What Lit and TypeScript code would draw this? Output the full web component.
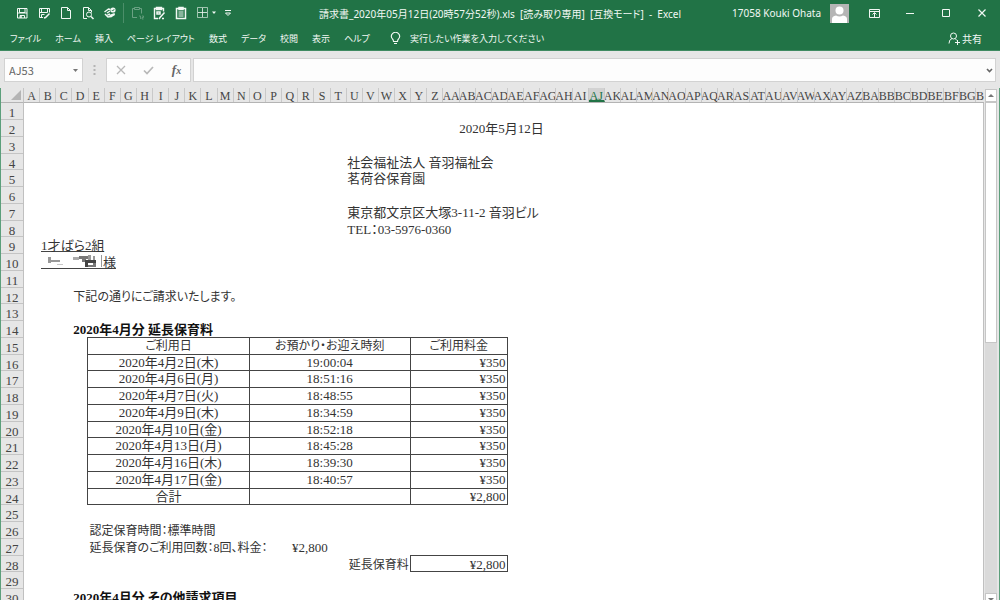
import { LitElement, html, css, svg } from "lit";
import { customElement } from "lit/decorators.js";
import { classMap } from "lit/directives/class-map.js";

const columnName = (i: number): string =>
  (i >= 26 ? String.fromCharCode(64 + Math.floor(i / 26)) : "") + String.fromCharCode(65 + (i % 26));

const COLUMNS = Array.from({ length: 60 }, (_, i) => columnName(i));
const ROWS = Array.from({ length: 30 }, (_, i) => i + 1);
const ACTIVE_COLUMN = "AJ";

const TABS = ["ファイル", "ホーム", "挿入", "ページ レイアウト", "数式", "データ", "校閲", "表示", "ヘルプ"];

const USAGE: [string, string, string][] = [
  ["2020年4月2日(木)", "19:00:04", "¥350"],
  ["2020年4月6日(月)", "18:51:16", "¥350"],
  ["2020年4月7日(火)", "18:48:55", "¥350"],
  ["2020年4月9日(木)", "18:34:59", "¥350"],
  ["2020年4月10日(金)", "18:52:18", "¥350"],
  ["2020年4月13日(月)", "18:45:28", "¥350"],
  ["2020年4月16日(木)", "18:39:30", "¥350"],
  ["2020年4月17日(金)", "18:40:57", "¥350"],
  ["合計", "", "¥2,800"],
];

const icon = (body: unknown, w = 14, h = 14) =>
  html`<svg width=${w} height=${h} viewBox="0 0 ${w} ${h}" fill="none" stroke="currentColor" aria-hidden="true">${body}</svg>`;

const TOOLS = [
  { label: "上書き保存", glyph: svg`<path d="M2.500 2.500h9.500v9.500h-9.500z"/><path d="M4.500 2.500v4h5.500v-4M2.500 7h9.500M5 12V9.500h4.500V12"/><path d="M6 9.500v2.500" stroke-width="1.500"/>` },
  { label: "名前を付けて保存", glyph: svg`<path d="M6 11.500H2.500v-9h10v4M4.500 2.500v4h6v-4M2.500 6.500h7M4.500 11v-2.500h3"/><path d="M12.500 7.500l-4 4-1.500.500" stroke-width="1.500"/>` },
  { label: "新規作成", glyph: svg`<path d="M2.500 1.500h6l3 3v8h-9zM8.500 1.500v3h3"/>` },
  { label: "印刷プレビュー", glyph: svg`<path d="M6 12.500H2.500v-11h5l3 3v2M7.500 1.500v3h3"/><circle cx="8" cy="8.500" r="2.500"/><path d="M10 10.500l2.500 2.500" stroke-width="1.600"/>` },
  { label: "スペルチェック", glyph: svg`<path d="M1.500 6l4-3 2 .500M2 8l3 3 3-.500M4 7l3-2M4.500 9l2.500-1" stroke-width="1.500"/><circle cx="10" cy="4" r="2.600" fill="currentColor" stroke="none"/><path d="M8.800 4l1 1 1.500-2" stroke="#217346" stroke-width=".8"/><path d="M6 9l5.500-2 .500 2-4 2.500z" fill="currentColor" stroke="none"/>` },
];

const CLIPS = [
  { label: "値の貼り付け", dim: true, glyph: svg`<path d="M7 11.500H2.500v-9h2M9.500 2.500h2v5M4.500 1.500h5v2h-5z"/><path d="M9 10h1.500v3M12 10h1.500v1.500H12V13h1.500" stroke-width=".8"/>` },
  { label: "書式の貼り付け", dim: false, glyph: svg`<path d="M6 12.500H2.500v-10h9v3M4.500 1.500h5v2h-5z" stroke-width="1.400"/><path d="M5 6h3v2H5zM12.500 6.500l-4.500 5-1 1.500M10 12.500h2" stroke-width="1.500"/>` },
  { label: "貼り付け", dim: false, glyph: svg`<path d="M2.500 2.500h9v10h-9zM5 1.500h4v2H5z" stroke-width="1.500"/><path d="M4.500 6h5M4.500 8h5M4.500 10h5"/>` },
];

@customElement("app-root")
export class AppRoot extends LitElement {
  static styles = css`
    :host {
      display: flex;
      flex-direction: column;
      height: 100vh;
      overflow: hidden;
      box-sizing: border-box;
      background: #e6e6e6;
      font-family: "Noto Sans", "Noto Sans CJK JP", sans-serif;
      font-size: 10px;
      color: #333;
    }
    * { box-sizing: border-box; }
    button {
      display: flex;
      align-items: center;
      justify-content: center;
      border: 0;
      padding: 0;
      background: none;
      font: inherit;
      color: inherit;
    }
    svg { display: block; flex: none; }
    .top { background: #217346; color: #f2f8f4; border-bottom: 1px solid #3f8a61; }
    .titlebar {
      display: grid;
      grid-template-columns: 1fr auto 1fr;
      align-items: center;
      height: 26px;
    }
    .tools { display: flex; align-items: center; gap: 8px; padding-left: 15px; }
    .divider { width: 1px; height: 20px; margin: 0 -2px; background: #4b8e69; }
    .dim { opacity: 0.35; }
    .title { margin: 0; font-size: 10px; font-weight: 400; white-space: pre; font-feature-settings: "palt"; }
    .window { display: flex; align-items: center; justify-content: flex-end; }
    .user { margin-right: 9px; white-space: nowrap; }
    .avatar { margin-right: 7px; }
    .window button { width: 36px; height: 26px; }
    .ribbon { display: flex; align-items: center; height: 24px; padding: 0 18px 0 10px; }
    .tabs { display: flex; gap: 14px; }
    .tabs, .tell { font-size: 9px; font-family: "Noto Sans CJK JP", sans-serif; font-feature-settings: "palt"; white-space: nowrap; }
    .tabs a { color: inherit; text-decoration: none; }
    .tell { display: flex; align-items: center; gap: 9px; margin-left: 20px; }
    .share { margin-left: auto; gap: 2px; }
    .formula { display: flex; align-items: stretch; height: 37px; padding: 7px 4px 6px 4px; }
    .box { display: flex; align-items: center; background: #fdfdfd; border: 1px solid #d2d2d2; }
    .name { width: 79px; justify-content: space-between; padding: 0 3px 0 4px; }
    input { border: 0; padding: 0; background: none; outline: none; min-width: 0; color: #666; font: 11px "Noto Sans CJK JP", sans-serif; }
    .name input { width: 50px; }
    .grip { display: flex; align-items: center; justify-content: center; width: 23px; color: #b4b4b4; }
    .actions { width: 85px; margin-right: 2px; justify-content: space-around; color: #b8b8b8; }
    .fx { font: italic bold 13px "Liberation Serif", serif; color: #666; }
    .fx small { font-size: 10px; }
    .entry { flex: 1; padding-right: 2px; }
    .entry input { flex: 1; }

    .main {
      flex: 1;
      min-height: 0;
      display: grid;
      grid-template-columns: 23px 1fr 15px;
      grid-template-rows: 15px 1fr;
      border-left: 1px solid #5c9f7b;
      border-right: 1px solid #5c9f7b;
      font-family: "Liberation Serif", "Noto Sans CJK JP", serif;
      font-size: 12px;
      overflow: hidden;
    }
    .corner { display: flex; justify-content: flex-end; align-items: flex-end; padding: 0 2px 2px 0; border-right: 1px solid #c4c4c4; border-bottom: 1px solid #b4b4b4; }
    .tracks { display: grid; grid-template-columns: repeat(119, minmax(0, 1fr)); }
    .heads { border-bottom: 1px solid #b4b4b4; }
    .head {
      grid-column: span 2;
      display: flex;
      justify-content: center;
      overflow: hidden;
      border-right: 1px solid #c9c9c9;
      line-height: 16px;
      color: #444;
    }
    .head:last-child { grid-column: span 1; justify-content: flex-start; border-right: 0; }
    .head.active { background: #d2d2d2; color: #217346; border-bottom: 2px solid #217346; }
    .lines { display: grid; grid-template-rows: repeat(7, 17px 17px 17px 16px) 17px 17px; }
    .nums { border-right: 1px solid #c0c0c0; overflow: hidden; min-height: 0; font-size: 13px; }
    .num { display: flex; justify-content: center; border-bottom: 1px solid #c4c4c4; line-height: 19px; color: #444; overflow: hidden; }
    .sheet { background: #fff; border-right: 1px solid #c0c0c0; overflow: hidden; min-height: 0; font-size: 13px; line-height: 17px; font-feature-settings: "palt"; }
    .cell { white-space: pre; }
    .c2 { grid-column: 3 / span 20; padding-left: 1px; }
    .c4 { grid-column: 7 / span 40; padding-left: 1px; }
    .c5 { grid-column: 9 / span 40; padding-left: 1px; }
    .c17 { grid-column: 34 / span 12; padding-left: 2px; }
    .c21 { grid-column: 41 / span 40; padding-left: 1px; }
    .c28 { grid-column: 55 / span 20; }
    .label { grid-column: 37 / span 12; text-align: right; padding-right: 2px; }
    .total { grid-column: 49 / span 12; margin: -1px 0 0 -1px; border: 1px solid #444; text-align: right; padding-right: 1px; }
    .compact { font-size: 12px; line-height: 19px; }
    .r2 { grid-row: 2; } .r4 { grid-row: 4; } .r5 { grid-row: 5; } .r7 { grid-row: 7; } .r8 { grid-row: 8; }
    .r9 { grid-row: 9; } .r10 { grid-row: 10; } .r12 { grid-row: 12; } .r14 { grid-row: 14; }
    .r26 { grid-row: 26; } .r27 { grid-row: 27; } .r28 { grid-row: 28; } .r30 { grid-row: 30; }
    .bold { margin: 0; font-size: 13px; font-weight: 700; color: #111; }
    .under { display: inline-flex; border-bottom: 1px solid #444; height: 15px; }
    .mosaic { padding: 0 1px 0 7px; }
    table {
      grid-column: 9 / span 52;
      grid-row: 15 / span 10;
      display: grid;
      grid-template-columns: subgrid;
      grid-template-rows: subgrid;
      margin: -1px 0 0 -1px;
      border: solid #444;
      border-width: 1px 0 0 1px;
    }
    thead, tbody, tr { display: contents; }
    th, td {
      grid-column: span 20;
      padding: 0;
      font-weight: 400;
      text-align: center;
      border: solid #444;
      border-width: 0 1px 1px 0;
      line-height: 16px;
      overflow: hidden;
    }
    th { font-size: 12px; }
    th:last-child, td:last-child { grid-column: span 12; }
    td:last-child { text-align: right; padding-right: 1px; }
    .scroll { grid-row: 1 / span 2; grid-column: 3; display: flex; flex-direction: column; width: 12px; margin: 1px 0 -6px 1px; background: #dadada; color: #777; }
    .scroll button { height: 13px; background: #fff; border: 1px solid #c6c6c6; }
    .thumb { height: 241px; background: #fff; border: 1px solid #c6c6c6; }
    .rail { flex: 1; }
  `;

  private cell(place: string, text: string) {
    return html`<div class="cell ${place}">${text}</div>`;
  }

  private renderTop() {
    return html`
      <header class="top">
        <div class="titlebar">
          <div class="tools">
            ${TOOLS.map((t) => html`<button aria-label=${t.label}>${icon(t.glyph)}</button>`)}
            <span class="divider"></span>
            ${CLIPS.map((t) => html`<button class=${classMap({ dim: t.dim })} aria-label=${t.label}>${icon(t.glyph)}</button>`)}
            <button aria-label="罫線">${icon(svg`<path d="M1.500 1.500h10v10h-10z" opacity=".6"/><path d="M6.500 2v9M2 6.500h9" opacity=".8"/><path d="M16 5.500h4l-2 2.500z" fill="currentColor" stroke="none"/>`, 20)}</button>
            <button aria-label="クイック アクセス ツール バーのカスタマイズ">${icon(svg`<path d="M1 4.500h6M1.500 7h5l-2.500 2.500z"/>`, 8)}</button>
          </div>
          <h1 class="title">請求書_2020年05月12日(20時57分52秒).xls  [読み取り専用]  [互換モード]  -  Excel</h1>
          <div class="window">
            <span class="user">17058 Kouki Ohata</span>
            <svg class="avatar" width="19" height="19" viewBox="0 0 19 19" aria-hidden="true">
              <path fill="#b5b5b5" d="M0 0h19v19H0z" /><circle cx="9.500" cy="6.500" r="4" fill="#fff" /><path fill="#fff" d="M2 19v-4q0-3 4-3.500q3.500 2 7 0q4 .5 4 3.500v4z" />
            </svg>
            <button aria-label="リボンの表示オプション">${icon(svg`<path d="M1.500 2.500h10v8h-10zM2 4.500h9M6.500 10V6M4.500 7.500l2-2 2 2"/>`, 13, 13)}</button>
            <button aria-label="最小化">${icon(svg`<path d="M1 5.500h8"/>`, 10, 10)}</button>
            <button aria-label="最大化">${icon(svg`<path d="M1.500 1.500h7v7h-7z"/>`, 10, 10)}</button>
            <button aria-label="閉じる">${icon(svg`<path d="M1.500 1.500l7 7M8.500 1.500l-7 7" stroke-width="1.200"/>`, 10, 10)}</button>
          </div>
        </div>
        <div class="ribbon">
          <nav class="tabs">${TABS.map((t) => html`<a href="#">${t}</a>`)}</nav>
          <button class="tell">
            ${icon(svg`<path d="M3.500 9.500q0-1.500-1-2.500a4 4 0 1 1 6 0q-1 1-1 2.500zM4 11.500h3" stroke-width="1.100"/>`, 11, 13)}
            <span>実行したい作業を入力してください</span>
          </button>
          <button class="share">
            ${icon(svg`<circle cx="5.500" cy="4" r="3"/><path d="M1 11.500q0-4 3-5M7 6.500l2 2M9.500 8v5M7 10.500h5"/>`, 12, 13)}
            <span>共有</span>
          </button>
        </div>
      </header>
    `;
  }

  private renderFormula() {
    return html`
      <div class="formula">
        <div class="box name">
          <input aria-label="名前ボックス" .value=${"AJ53"} />
          <button aria-label="名前の一覧">${icon(svg`<path d="M1 1h5L3.500 4z" fill="#777" stroke="none"/>`, 7, 5)}</button>
        </div>
        <span class="grip">${icon(svg`<path d="M1.500 0v10" stroke-width="2" stroke-dasharray="2 2"/>`, 3, 10)}</span>
        <div class="box actions">
          <button aria-label="キャンセル">${icon(svg`<path d="M1 1l8 8M9 1l-8 8" stroke-width="1.300"/>`, 10, 10)}</button>
          <button aria-label="入力">${icon(svg`<path d="M1 5.500l3 3L10 2" stroke-width="1.700"/>`, 11, 10)}</button>
          <button class="fx" aria-label="関数の挿入">f<small>x</small></button>
        </div>
        <div class="box entry">
          <input aria-label="数式バー" />
          <button aria-label="数式バーの展開">${icon(svg`<path d="M1 1l2.500 2.500L6 1" stroke="#666" stroke-width="1.600"/>`, 7, 5)}</button>
        </div>
      </div>
    `;
  }

  private renderTable() {
    return html`
      <table>
        <thead><tr><th>ご利用日</th><th>お預かり・お迎え時刻</th><th>ご利用料金</th></tr></thead>
        <tbody>${USAGE.map((r) => html`<tr>${r.map((v) => html`<td>${v}</td>`)}</tr>`)}</tbody>
      </table>
    `;
  }

  render() {
    return html`
      ${this.renderTop()} ${this.renderFormula()}
      <main class="main">
        <div class="corner">${icon(svg`<path d="M10 0v10H0z" fill="#b4b4b4" stroke="none"/>`, 10, 10)}</div>
        <div class="tracks heads">
          ${COLUMNS.map((c) => html`<span class=${classMap({ head: true, active: c === ACTIVE_COLUMN })}>${c}</span>`)}
        </div>
        <div class="scroll">
          <button aria-label="上へ">${icon(svg`<path d="M0 4h6L3 1z" fill="currentColor" stroke="none"/>`, 6, 5)}</button>
          <div class="thumb"></div>
          <div class="rail"></div>
          <button aria-label="下へ">${icon(svg`<path d="M0 1h6L3 4z" fill="currentColor" stroke="none"/>`, 6, 5)}</button>
        </div>
        <div class="lines nums">${ROWS.map((n) => html`<span class="num">${n}</span>`)}</div>
        <div class="lines tracks sheet">
          ${this.cell("c28 r2", "2020年5月12日")}
          ${this.cell("c21 r4", "社会福祉法人 音羽福祉会")}
          ${this.cell("c21 r5", "茗荷谷保育園")}
          ${this.cell("c21 r7", "東京都文京区大塚3-11-2 音羽ビル")}
          ${this.cell("c21 r8", "TEL：03-5976-0360")}
          <div class="cell c2 r9"><span class="under">1才ばら2組</span></div>
          <div class="cell c2 r10"><span class="under"><svg class="mosaic" width="62" height="14" viewBox="0 0 54 14" aria-hidden="true">
            <path fill="#999" d="M0 3h3v6H0zM3 6h9v2H3z" /><path fill="#c8c8c8" d="M9 10h6v1H9z" />
            <path fill="#aaa" d="M25 3h6v3h-6z" /><path fill="#777" d="M31 2h9v3h-9zM34 5h4v3h-4z" />
            <path fill="#999" d="M40 1h3v5h-3zM45 2h2v4h-2z" /><path fill="#444" d="M37 6h11v3H37zM37 9h3v4h-3z" />
            <path fill="#777" d="M45 9h3v4h-3zM40 11h5v2h-5z" /><path fill="#999" d="M53 1h1v12h-1z" />
          </svg>様</span></div>
          ${this.cell("c4 r12 compact", "下記の通りにご請求いたします。")}
          <h2 class="cell c4 r14 bold">2020年4月分 延長保育料</h2>
          ${this.renderTable()}
          ${this.cell("c5 r26 compact", "認定保育時間：標準時間")}
          ${this.cell("c5 r27 compact", "延長保育のご利用回数：8回、料金：")}
          ${this.cell("c17 r27", "¥2,800")}
          ${this.cell("label r28 compact", "延長保育料")}
          ${this.cell("total r28", "¥2,800")}
          <h2 class="cell c4 r30 bold">2020年4月分 その他請求項目</h2>
        </div>
      </main>
    `;
  }
}
